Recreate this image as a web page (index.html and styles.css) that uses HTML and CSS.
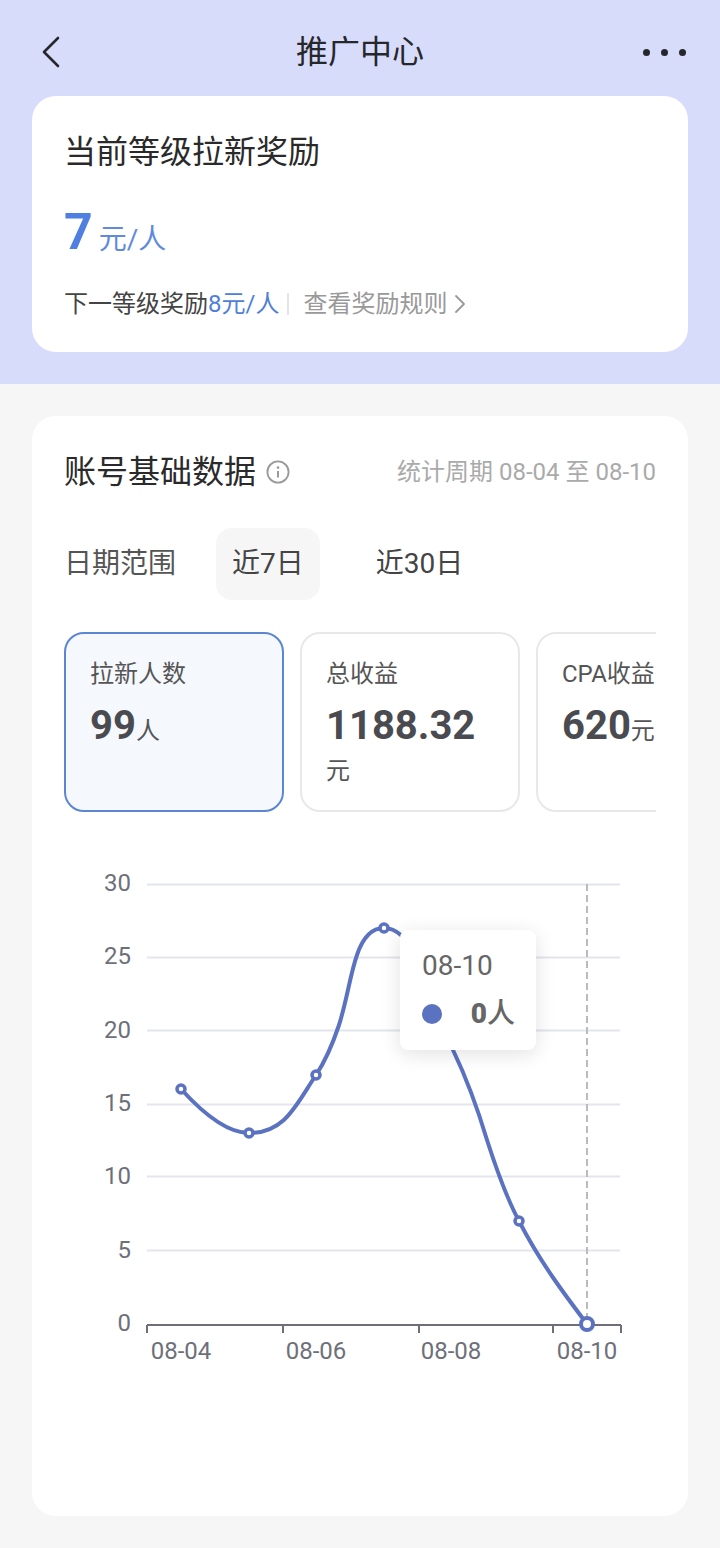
FILE: index.html
```html
<!DOCTYPE html>
<html>
<head>
    <meta charset="utf-8"/>
    <title>推广中心</title>
    <link rel="stylesheet" href="styles.css">
</head>
<body>

<div class="hero">
    <div class="nav">
        <svg class="nav-back" width="20" height="32" viewBox="0 0 20 32">
            <path d="M17 2 L3 16 L17 30" fill="none" stroke="#26272c" stroke-width="2.6" stroke-linecap="round" stroke-linejoin="round"/>
        </svg>
        <div class="nav-title">推广中心</div>
        <div class="nav-more"><i></i><i></i><i></i></div>
    </div>

    <div class="level-card">
        <div class="level-title">当前等级拉新奖励</div>
        <div class="level-amount">
            <span class="level-num">7</span>
            <span class="level-unit">元/人</span>
        </div>
        <div class="level-next">
            <span>下一等级奖励<b>8元/人</b></span>
            <span class="level-sep"></span>
            <span class="level-link">查看奖励规则</span>
            <svg width="12" height="20" viewBox="0 0 12 20">
                <path d="M2 2 L10 10 L2 18" fill="none" stroke="#9a9a9a" stroke-width="1.8" stroke-linecap="round" stroke-linejoin="round"/>
            </svg>
        </div>
    </div>
</div>

<div class="data-card">
    <div class="data-head">
        <div class="data-title">账号基础数据</div>
        <svg class="data-info" width="24" height="24" viewBox="0 0 24 24">
            <circle cx="12" cy="12" r="10.6" fill="none" stroke="#999" stroke-width="1.8"/>
            <circle cx="12" cy="7.6" r="1.3" fill="#999"/>
            <path d="M12 11 V17.4" stroke="#999" stroke-width="2"/>
        </svg>
        <div class="data-period">统计周期 08-04 至 08-10</div>
    </div>

    <div class="range">
        <div class="range-label">日期范围</div>
        <div class="range-btn range-on">近7日</div>
        <div class="range-btn">近30日</div>
    </div>

    <div class="stats">
        <div class="stat stat-on">
            <div class="stat-label">拉新人数</div>
            <div class="stat-value"><b>99</b>人</div>
        </div>
        <div class="stat">
            <div class="stat-label">总收益</div>
            <div class="stat-value"><b>1188.32</b>元</div>
        </div>
        <div class="stat">
            <div class="stat-label">CPA收益</div>
            <div class="stat-value"><b>620</b>元</div>
        </div>
    </div>

    <div class="chart">
        <svg width="592" height="520" viewBox="64 860 592 520">
            <g stroke="#e4e5eb" stroke-width="2">
                <path d="M147 884.5 H620"/>
                <path d="M147 957.5 H620"/>
                <path d="M147 1030.5 H620"/>
                <path d="M147 1104.5 H620"/>
                <path d="M147 1176.5 H620"/>
                <path d="M147 1250.5 H620"/>
            </g>
            <path d="M587 884 V1325" stroke="#bbbbbb" stroke-width="2" stroke-dasharray="7 4"/>
            <g class="chart-y" text-anchor="end">
                <text x="131" y="891">30</text>
                <text x="131" y="964">25</text>
                <text x="131" y="1038">20</text>
                <text x="131" y="1111">15</text>
                <text x="131" y="1184">10</text>
                <text x="131" y="1258">5</text>
                <text x="131" y="1331">0</text>
            </g>
            <path d="M147 1325 H621 M147 1325 V1333 M283 1325 V1333 M419 1325 V1333 M553 1325 V1333 M621 1325 V1333" fill="none" stroke="#6e7079" stroke-width="2"/>
            <g class="chart-x" text-anchor="middle">
                <text x="181" y="1359">08-04</text>
                <text x="316" y="1359">08-06</text>
                <text x="451" y="1359">08-08</text>
                <text x="587" y="1359">08-10</text>
            </g>
            <path d="M181 1089 C200 1110 225 1133 249 1133 C285 1133 296 1105 316 1075 C326 1060 334 1040 339 1025 C347 1000 350 975 357 955 C362 940 370 928 384 928 C420 928 438 1015 453 1050 C465 1075 478 1110 487 1140 C495 1165 505 1195 519 1221 C540 1262 565 1295 587 1324" fill="none" stroke="#5b72c0" stroke-width="4"/>
            <g fill="#fff" stroke="#5b72c0" stroke-width="3.5">
                <circle cx="181" cy="1089" r="4"/>
                <circle cx="249" cy="1133" r="4"/>
                <circle cx="316" cy="1075" r="4"/>
                <circle cx="384" cy="928" r="4"/>
                <circle cx="519" cy="1221" r="4"/>
                <circle cx="587" cy="1324" r="6" stroke-width="4"/>
            </g>
        </svg>
        <div class="tip">
            <div class="tip-date">08-10</div>
            <div class="tip-row">
                <i class="tip-dot"></i>
                <span class="tip-val"><b>0</b>人</span>
            </div>
        </div>
    </div>
</div>

</body>
</html>
```

FILE: styles.css
```css
body {
    margin: 0;
    background: #f6f6f6;
    font-family: Roboto, "Noto Sans CJK SC", sans-serif;
    color: #222;
}

.hero {
    background: #d8dcfb;
    padding: 0 32px 32px 32px;
}

.nav {
    height: 96px;
    display: grid;
    grid-template-columns: 1fr auto 1fr;
    align-items: center;
}

.nav-back {
    margin: 8px 0 0 9px;
}

.nav-title {
    font-size: 32px;
    line-height: 48px;
    margin-top: 8px;
    color: #26272c;
}

.nav-more {
    display: flex;
    justify-content: flex-end;
    gap: 11px;
    margin: 8px 2px 0 0;
}

.nav-more i {
    display: block;
    width: 7px;
    height: 7px;
    border-radius: 50%;
    background: #26272c;
}

.level-card {
    background: #fff;
    border-radius: 24px;
    height: 256px;
    padding: 32px 32px 0 32px;
    box-sizing: border-box;
}

.level-title {
    font-size: 32px;
    line-height: 48px;
    color: #2a2a2a;
}

.level-amount {
    display: flex;
    align-items: baseline;
    gap: 6px;
    margin-top: 26px;
    color: #4f80e1;
    line-height: 60px;
}

.level-num {
    font-size: 50px;
    font-weight: 700;
}

.level-unit {
    font-size: 28px;
    color: #5f8bdc;
}

.level-next {
    display: flex;
    align-items: center;
    margin-top: 16px;
    font-size: 24px;
    line-height: 36px;
    color: #444;
}

.level-next b {
    font-weight: 400;
    color: #4f80d8;
}

.level-sep {
    width: 2px;
    height: 22px;
    background: #e4e4e4;
    margin: 0 14px 0 8px;
}

.level-link {
    color: #999;
}

.level-next svg {
    margin-left: 7px;
}

.data-card {
    background: #fff;
    border-radius: 24px;
    margin: 32px 32px 32px 32px;
    padding: 32px 32px 136px 32px;
}

.data-head {
    display: flex;
    align-items: center;
    height: 48px;
}

.data-title {
    font-size: 32px;
    line-height: 48px;
    color: #2a2a2a;
}

.data-info {
    margin-left: 10px;
}

.data-period {
    margin-left: auto;
    margin-bottom: 6px;
    font-size: 24px;
    color: #aaa;
}

.range {
    display: flex;
    align-items: center;
    margin-top: 32px;
    font-size: 28px;
    color: #444;
}

.range-label {
    width: 150px;
    line-height: 72px;
    color: #555;
}

.range-btn {
    height: 72px;
    line-height: 72px;
    padding: 0 16px;
    margin-left: 2px;
    margin-right: 38px;
    border-radius: 16px;
}

.range-on {
    background: #f6f6f6;
}

.stats {
    display: flex;
    gap: 16px;
    margin-top: 32px;
    overflow: hidden;
}

.stat {
    flex: none;
    width: 220px;
    height: 180px;
    box-sizing: border-box;
    border: 2px solid #e8e8e8;
    border-radius: 20px;
    padding: 20px 24px 0 24px;
    font-size: 24px;
    color: #555;
}

.stat-on {
    border-color: #5a86d2;
    background: #f5f8fd;
}

.stat-label {
    line-height: 40px;
}

.stat-value {
    line-height: 40px;
    margin-top: 12px;
}

.stat-value b {
    font-size: 40px;
    font-weight: 700;
    color: #4a4b50;
}

.chart {
    position: relative;
    margin-top: 48px;
    height: 520px;
}

.chart svg {
    display: block;
}

.chart-y text, .chart-x text {
    font-family: Roboto, sans-serif;
    font-size: 24px;
    fill: #6e7079;
}

.tip {
    position: absolute;
    left: 336px;
    top: 70px;
    width: 136px;
    height: 120px;
    box-sizing: border-box;
    padding: 15px 22px 0 22px;
    background: #fff;
    border-radius: 8px;
    box-shadow: 0 4px 20px rgba(0, 0, 0, 0.12);
    font-size: 28px;
    color: #666;
}

.tip-date {
    line-height: 42px;
}

.tip-row {
    display: flex;
    align-items: center;
    justify-content: space-between;
    line-height: 48px;
    margin: 3px -1px 0 0;
}

.tip-dot {
    width: 20px;
    height: 20px;
    border-radius: 50%;
    background: #5b72c0;
}

.tip-val {
    font-weight: 500;
}

.tip-val b {
    font-weight: 900;
}
```
